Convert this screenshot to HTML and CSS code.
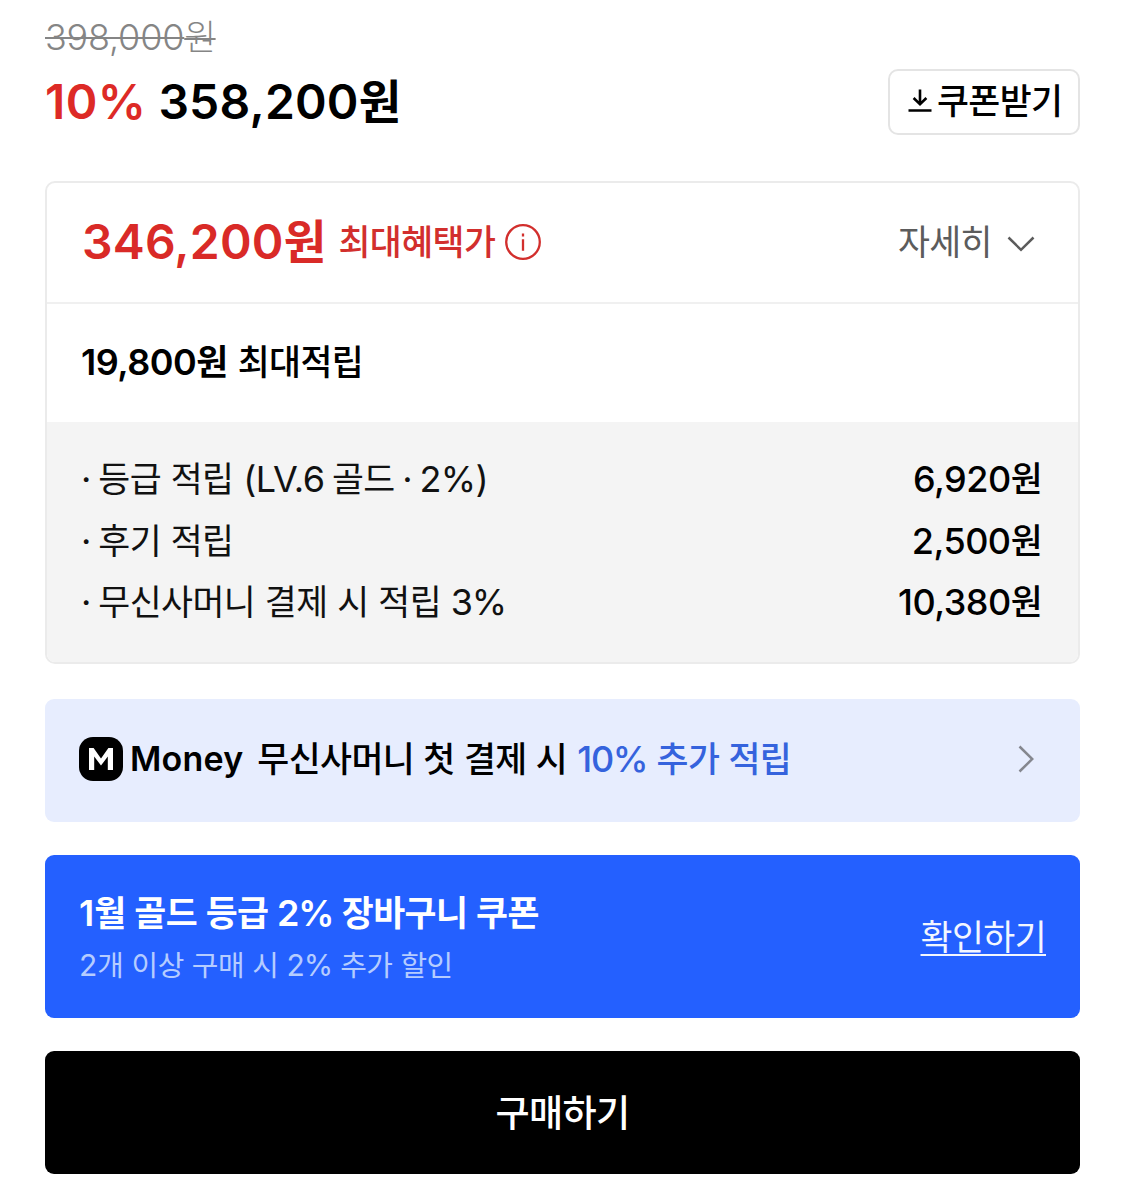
FILE: index.html
```html
<!DOCTYPE html>
<html lang="ko">
<head>
<meta charset="utf-8">
<title>구매 혜택</title>
<link rel="stylesheet" href="styles.css">
</head>
<body>
<main class="page">
  <del class="old-price">398,000<span class="ko">원</span></del>
  <div class="price-row">
    <p class="price"><span class="rate">10%</span><span class="amount">358,200<span class="ko">원</span></span></p>
    <button class="coupon-btn">
      <svg class="icon-down" viewBox="0 0 24 24"><path d="M12 .5v14.500M5.600 9 12 15.200 18.400 9M.5 21.500h23"/></svg>
      <span class="ko">쿠폰받기</span>
    </button>
  </div>

  <section class="benefit">
    <div class="benefit-head">
      <strong class="best-price">346,200<span class="ko">원</span></strong>
      <span class="best-label"><span class="ko">최대혜택가</span></span>
      <svg class="icon-info" viewBox="0 0 36 36"><circle cx="18" cy="18" r="16.8"/><path d="M18 15.200v11.600M18 9.600v2.900"/></svg>
      <span class="more"><span class="ko">자세히</span></span>
      <svg class="icon-chev-down" viewBox="0 0 28 16"><path d="M1.500 1.500 14 13.800 26.500 1.500"/></svg>
    </div>
    <div class="max-point"><strong>19,800<span class="ko">원</span></strong><span class="ko">최대적립</span></div>
    <ul class="points">
      <li><span class="label">· <span class="ko">등급 적립 </span>(LV.6 <span class="ko">골드</span> · 2%)</span><span class="value">6,920<span class="ko">원</span></span></li>
      <li><span class="label">· <span class="ko">후기 적립</span></span><span class="value">2,500<span class="ko">원</span></span></li>
      <li><span class="label">· <span class="ko">무신사머니 결제 시 적립 </span><span class="percent">3%</span></span><span class="value">10,380<span class="ko">원</span></span></li>
    </ul>
  </section>

  <a class="money">
    <svg class="logo" viewBox="0 0 44 44"><rect width="44" height="44" rx="14"/><path d="M10 33V11h4.600L22 21.500 29.400 11H34v22h-5.200V19.400L22 28.600l-6.800-9.200V33z"/></svg>
    <span class="wordmark">Money</span>
    <span class="money-text"><span class="ko">무신사머니 첫 결제 시</span></span>
    <span class="accent"><span class="percent">10%</span><span class="ko"> 추가 적립</span></span>
    <svg class="icon-chev-right" viewBox="0 0 16 28"><path d="M1.500 1.500 14.300 14 1.500 26.500"/></svg>
  </a>

  <section class="grade">
    <div class="grade-copy">
      <p class="grade-title">1<span class="ko">월 골드 등급 </span><span class="percent">2%</span><span class="ko"> 장바구니 쿠폰</span></p>
      <p class="grade-sub">2<span class="ko">개 이상 구매 시 </span><span class="percent">2%</span><span class="ko"> 추가 할인</span></p>
    </div>
    <a class="check ko">확인하기</a>
  </section>

  <button class="buy"><span class="ko">구매하기</span></button>
</main>
</body>
</html>
```
FILE: styles.css
```css
* { box-sizing: border-box; }
body { margin: 0; background: #fff; color: #000; font: 400 36px/44px Inter, "Noto Sans CJK KR", sans-serif; }
p, ul { margin: 0; padding: 0; }
button { font: inherit; cursor: pointer; }
svg { display: block; flex: none; fill: none; stroke: currentColor; }
strong { font-weight: 600; }

/* Hangul runs sit slightly smaller than the Latin digits beside them */
.ko { font-size: 0.965em; letter-spacing: -0.017em; word-spacing: 0.015em; }
.percent { letter-spacing: -0.035em; }

.page { display: flex; flex-direction: column; padding: 15px 45px 22px; white-space: nowrap; }

.old-price { align-self: flex-start; color: #858585; font-weight: 300; letter-spacing: -0.2px; text-decoration-thickness: 2px; }
.price-row { display: flex; align-items: center; justify-content: space-between; height: 66px; margin-top: 10px; }
.price { display: flex; gap: 12px; font-size: 48px; line-height: 58px; font-weight: 600; }
.rate { color: #dd2a26; letter-spacing: 0.4px; }
.amount { letter-spacing: 0.2px; }
.coupon-btn { display: flex; align-items: center; gap: 5px; height: 66px; width: 192px; padding: 0 0 2px 18px; background: #fff; color: #000; border: 2px solid #e4e4e4; border-radius: 10px; font-weight: 500; }
.icon-down { width: 24px; height: 24px; stroke-width: 2.6; }

.benefit { margin-top: 46px; height: 483px; border: 2px solid #ebebeb; border-radius: 10px; overflow: hidden; }
.benefit-head { display: flex; align-items: center; height: 121px; padding: 0 43px 2px 35px; border-bottom: 2px solid #f0f0f0; color: #d22f2d; }
.best-price { font-size: 48px; line-height: 58px; letter-spacing: 0.2px; color: #d92a27; }
.best-label { margin-left: 13px; font-weight: 500; }
.icon-info { width: 36px; height: 36px; margin-left: 10px; stroke-width: 2.3; }
.more { margin-left: auto; color: #5c5c5c; }
.icon-chev-down { width: 28px; height: 16px; margin-left: 15px; margin-top: 4px; color: #5c5c5c; stroke-width: 2.5; }
.max-point { display: flex; align-items: center; gap: 10px; height: 118px; padding: 0 35px 3px 34px; font-weight: 500; }
.max-point strong { letter-spacing: -0.5px; }
.points { list-style: none; height: 242px; padding: 27px 36px 0 34px; background: #f4f4f4; color: #111; }
.points li { display: flex; justify-content: space-between; line-height: 61.5px; }
.label { letter-spacing: -0.6px; word-spacing: -2px; }
.value { font-weight: 500; letter-spacing: -0.5px; color: #000; }

.money { display: flex; align-items: center; height: 123px; margin-top: 35px; padding: 0 46px 3px 34px; background: #e7edfe; border-radius: 9px; font-weight: 500; }
.logo { width: 44px; height: 44px; }
.wordmark { margin-left: 7px; font-size: 34px; font-weight: 600; letter-spacing: 0.2px; }
.logo rect { fill: #000; stroke: none; }
.logo path { fill: #fff; stroke: none; }
.money-text { margin-left: 14px; }
.accent { margin-left: 10px; color: #3563dd; }
.icon-chev-right { width: 16px; height: 28px; margin-left: auto; stroke-width: 2.5; color: #85878f; }

.grade { display: flex; align-items: center; justify-content: space-between; height: 163px; margin-top: 33px; padding: 0 34px; background: #2460ff; color: #fff; border-radius: 9px; }
.grade-copy { padding-top: 4px; }
.grade-title { font-weight: 600; line-height: 54px; }
.grade-sub { font-size: 30px; line-height: 50px; color: #b5ccff; }
.check { color: #f2f6ff; text-decoration: underline; text-decoration-thickness: 2px; text-underline-offset: 4px; text-decoration-skip-ink: none; }

.buy { height: 123px; margin-top: 33px; padding: 2px 0 0; background: #000; color: #fff; border: 0; border-radius: 9px; font-size: 38.5px; font-weight: 500; }
```
